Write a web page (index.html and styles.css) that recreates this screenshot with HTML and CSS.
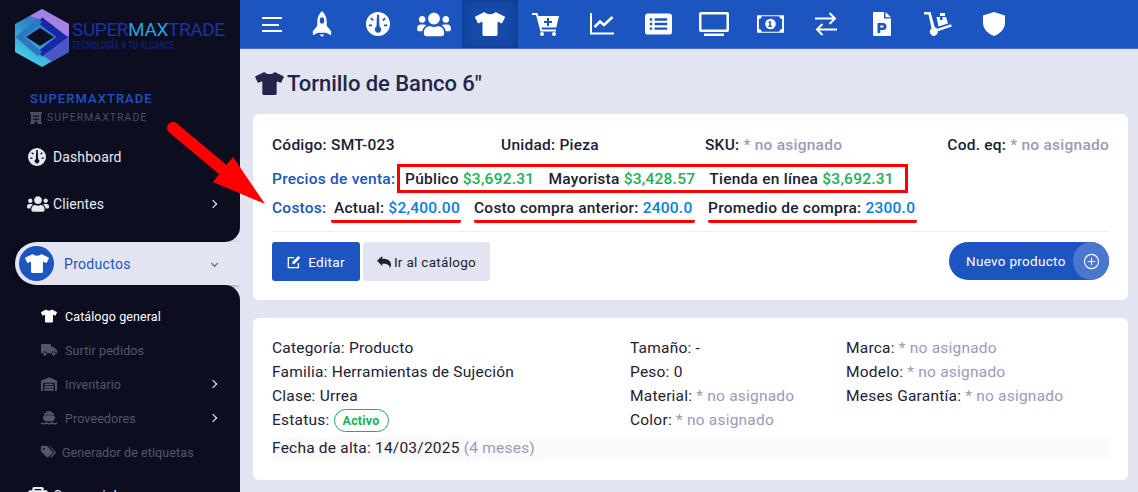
FILE: index.html
```html
<!DOCTYPE html>
<html lang="es">
<head>
    <meta charset="UTF-8">
    <title>Tornillo de Banco 6"</title>
    <link rel="stylesheet" href="styles.css">
</head>
<body>
    <svg class="sprite" xmlns="http://www.w3.org/2000/svg">
        <symbol id="i-shirt" viewBox="0 0 640 512"><path d="M631.2 96.5L436.5 0C416.4 27.8 371.9 47.2 320 47.2S223.6 27.8 203.5 0L8.8 96.5c-7.9 4-11.1 13.6-7.2 21.5l57.2 114.5c4 7.9 13.6 11.1 21.5 7.2l56.6-27.7c10.6-5.2 23-2.7 23 9.4V480c0 17.7 14.3 32 32 32h256c17.7 0 32-14.3 32-32V221.9c0-12.2 12.4-14.6 23-9.4l56.6 27.7c7.9 4 17.5.8 21.5-7.2L638.3 118c4-7.9.8-17.6-7.1-21.5z"/></symbol>
        <symbol id="i-users" viewBox="0 0 640 512"><path d="M96 224c35.3 0 64-28.7 64-64s-28.7-64-64-64-64 28.7-64 64 28.7 64 64 64zm448 0c35.3 0 64-28.7 64-64s-28.7-64-64-64-64 28.7-64 64 28.7 64 64 64zm32 32h-64c-17.6 0-33.5 7.1-45.1 18.6 40.3 22.1 68.9 62 75.1 109.4h66c17.7 0 32-14.3 32-32v-32c0-35.3-28.7-64-64-64zm-256 0c61.9 0 112-50.1 112-112S381.9 32 320 32 208 82.1 208 144s50.1 112 112 112zm76.8 32h-8.3c-20.8 10-43.9 16-68.5 16s-47.6-6-68.5-16h-8.3C179.6 288 128 339.6 128 403.2V432c0 26.5 21.5 48 48 48h288c26.5 0 48-21.5 48-48v-28.8c0-63.6-51.6-115.2-115.2-115.2zm-223.7-13.4C161.5 263.1 145.6 256 128 256H64c-35.3 0-64 28.7-64 64v32c0 17.7 14.3 32 32 32h65.9c6.3-47.4 34.9-87.3 75.2-109.4z"/></symbol>
        <symbol id="i-gauge" viewBox="0 0 24 24"><path fill-rule="evenodd" d="M12 0a12 12 0 1 0 0 24 12 12 0 0 0 0-24zM11 2.800h2l.5 11.800a3.200 3.200 0 1 1-3 0zM5.500 5.500l2.300 2.300-1.300 1.300-2.300-2.300zM18.500 5.500l1.300 1.300-2.300 2.300-1.300-1.300zM2.800 12.500h3.200v1.800H2.800zM18 12.500h3.200v1.800H18z"/></symbol>
        <symbol id="i-rocket" viewBox="0 0 20 26"><path fill-rule="evenodd" d="M10 0c3 2.600 4.700 6.300 4.700 10.500v4.300l4.500 5.500-.1 3.900-4.900-2.400H5.800L.9 24.200.8 20.300l4.500-5.500v-4.300C5.300 6.300 7 2.600 10 0zm0 6.300a2.200 3.200 0 1 0 0 6.400 2.200 3.200 0 0 0 0-6.400zM7.600 23.400h4.800L10 26z"/></symbol>
        <symbol id="i-cart" viewBox="0 0 28 24"><path fill-rule="evenodd" d="M0 1h5.500l.8 3H27l-2.700 11.500H9.500l.5 2H24v2H8.500L4 3H0zM15 6v3h-3v2h3v3h2v-3h3V9h-3V6z"/><circle cx="10" cy="22" r="2"/><circle cx="22" cy="22" r="2"/></symbol>
        <symbol id="i-chart" viewBox="0 0 24 24"><path d="M1 1v20.500h23" fill="none" stroke="currentColor" stroke-width="2"/><path d="M4.500 15l5.500-5.500 4 3.500 8.500-8" fill="none" stroke="currentColor" stroke-width="2.600"/></symbol>
        <symbol id="i-list" viewBox="0 0 28 22"><path fill-rule="evenodd" d="M3 0h22a3 3 0 0 1 3 3v16a3 3 0 0 1-3 3H3a3 3 0 0 1-3-3V3a3 3 0 0 1 3-3zM5 5v2.500h2.500V5zM10 5v2.500h13V5zM5 9.800v2.500h2.500V9.800zM10 9.800v2.500h13V9.800zM5 14.500V17h2.500v-2.500zM10 14.500V17h13v-2.500z"/></symbol>
        <symbol id="i-tv" viewBox="0 0 30 24"><path fill-rule="evenodd" d="M2 0h26a2 2 0 0 1 2 2v16a2 2 0 0 1-2 2H2a2 2 0 0 1-2-2V2a2 2 0 0 1 2-2zm.5 2.500v15h25v-15zM5 21.500h20V24H5z"/></symbol>
        <symbol id="i-money" viewBox="0 0 28 20"><path fill-rule="evenodd" d="M0 1h28v18H0zM2 5v10a3.500 3.500 0 0 1 3 3h18a3.500 3.500 0 0 1 3-3V5a3.500 3.500 0 0 1-3-3H5a3.500 3.500 0 0 1-3 3zM14 4.500a5.500 5.500 0 1 1 0 11 5.500 5.500 0 0 1 0-11zM13.800 6.800l-2 1v1.100l1-.3v3.300h-1.100V13h3.800v-1.100h-1.100V6.800z"/></symbol>
        <symbol id="i-swap" viewBox="0 0 22 24"><path d="M0 6.500h20M14.500 1l5.500 5.500-5.500 5.500M22 17.500H2M7.500 12L2 17.500 7.500 23" fill="none" stroke="currentColor" stroke-width="2"/></symbol>
        <symbol id="i-file" viewBox="0 0 18 24"><path fill-rule="evenodd" d="M1 0h10v6.500h7V23a1 1 0 0 1-1 1H1a1 1 0 0 1-1-1V1a1 1 0 0 1 1-1zm3.500 11v10h2.800v-3h2.700a3.500 3.500 0 0 0 0-7zm2.800 2.400h2.300a1.100 1.100 0 0 1 0 2.200H7.300zM12.500 0L18 5.200h-5.500z"/></symbol>
        <symbol id="i-dolly" viewBox="0 0 28 24"><path d="M0 0h6.500l4.300 15.200a4 4 0 0 1 2.400 1.600L27 12.200l.8 2.400-14 4.600a4 4 0 1 1-6.200-2.700L4.500 2.500H0z"/><path fill-rule="evenodd" d="M12.500 5h3.500v3h2.500V5H22l2 6.500-9.500 3zM16 1h5v3h-5z"/></symbol>
        <symbol id="i-shield" viewBox="0 0 22 24"><path d="M11 0l11 3.500v7c0 6.500-4.500 11-11 13.500C4.500 21.500 0 17 0 10.500v-7z"/></symbol>
        <symbol id="i-building" viewBox="0 0 12 12"><path fill-rule="evenodd" d="M0 0h12v2h-1v8.500h1V12H7.500V9.500h-3V12H0v-1.500h1V2H0zM3 3.500v1.500h1.500V3.500zM7.500 3.500v1.500H9V3.500zM3 6.500V8h1.500V6.500zM7.500 6.500V8H9V6.500zM5 3.500v1.500h2V3.500zM5 6.500V8h2V6.500z"/></symbol>
        <symbol id="i-truck" viewBox="0 0 24 18"><path d="M1.500 0h12A1.500 1.500 0 0 1 15 1.500V4h3.500L24 9.500V14h-2a3 3 0 0 0-6 0H9a3 3 0 0 0-6 0H0V1.500A1.500 1.500 0 0 1 1.500 0z"/><circle cx="6" cy="15" r="2.500"/><circle cx="19" cy="15" r="2.500"/></symbol>
        <symbol id="i-garage" viewBox="0 0 24 20"><path fill-rule="evenodd" d="M12 0l12 5v15h-3V8H3v12H0V5z"/><path d="M5 9.500h14V12H5zM5 13h14v2.500H5zM5 16.700h14V20H5z"/></symbol>
        <symbol id="i-ship" viewBox="0 0 24 20"><path d="M8 0h8v2.500h3v5l3 1-3.500 6.500h-13L2 8.500l3-1v-5h3zM7.500 5v1.800L12 5.500l4.500 1.300V5z"/><path d="M0 16.500c2 0 2.500 1.300 4 1.300s2-1.300 4-1.300 2.500 1.300 4 1.300 2-1.300 4-1.300 2.500 1.300 4 1.300 2-1.300 4-1.300V19c-2 0-2.500 1-4 1s-2-1-4-1-2.500 1-4 1-2-1-4-1-2.500 1-4 1-2-1-4-1z"/></symbol>
        <symbol id="i-tags" viewBox="0 0 24 20"><path fill-rule="evenodd" d="M0 2a2 2 0 0 1 2-2h7l9 9a2 2 0 0 1 0 2.800L11.800 18a2 2 0 0 1-2.800 0L0 9zM4.500 3a1.700 1.700 0 1 0 0 3.400 1.700 1.700 0 0 0 0-3.400z"/><path d="M12 0h1.500L23 9.500a2 2 0 0 1 0 2.800L16.500 19l-1.500-1.500 6.200-7z"/></symbol>
        <symbol id="i-case" viewBox="0 0 24 22"><path fill-rule="evenodd" d="M5 4V2a2 2 0 0 1 2-2h10a2 2 0 0 1 2 2v2h3a2 2 0 0 1 2 2v14a2 2 0 0 1-2 2H2a2 2 0 0 1-2-2V6a2 2 0 0 1 2-2zm3-1.500V4h8V2.500z"/></symbol>
    </svg>

    <div class="app">
        <aside class="sidebar">
            <div class="side-top">
                <div class="brand">
                    <svg class="brand-logo" viewBox="0 0 56 58">
                        <defs>
                            <linearGradient id="hexa" x1="0" y1="1" x2="0.6" y2="0">
                                <stop offset="0" stop-color="#52e6ee"/>
                                <stop offset="0.6" stop-color="#2f8ccc"/>
                                <stop offset="1" stop-color="#3f5fc4"/>
                            </linearGradient>
                        </defs>
                        <path d="M28 0l27 15v28L28 58 1 43V15z" fill="url(#hexa)"/>
                        <path d="M28 0l27 15v15L34 14 16 7z" fill="#a681e2"/>
                        <path d="M55 26v17L38 52.500 30 47z" fill="#4a55c8"/>
                        <path d="M26 11l22 17-22 17" fill="none" stroke="#1428a8" stroke-width="7"/>
                        <path d="M26 11L6 28l20 17" fill="none" stroke="#2a78c0" stroke-width="6"/>
                        <path d="M26 19l14 9-14 9-14-9z" fill="#0c0e20"/>
                    </svg>
                    <div class="brand-text">
                        <div class="brand-name">SUPER<span>MAX</span>TRADE</div>
                        <div class="brand-tag">TECNOLOGÍA A TU ALCANCE</div>
                    </div>
                </div>
                <div class="account">
                    <div class="account-name">SUPERMAXTRADE</div>
                    <div class="account-sub"><svg><use href="#i-building"/></svg>SUPERMAXTRADE</div>
                </div>
                <a class="side-link dash"><svg class="side-icon gauge"><use href="#i-gauge"/></svg>Dashboard</a>
                <a class="side-link"><svg class="side-icon"><use href="#i-users"/></svg>Clientes<span class="chev"></span></a>
            </div>
            <div class="active-wrap">
                <a class="side-active">
                    <span class="active-dot"><svg><use href="#i-shirt"/></svg></span>
                    Productos
                    <span class="chev-down"></span>
                </a>
            </div>
            <div class="side-rest">
                <a class="sub-link on"><svg><use href="#i-shirt"/></svg>Catálogo general</a>
                <a class="sub-link"><svg><use href="#i-truck"/></svg>Surtir pedidos</a>
                <a class="sub-link"><svg><use href="#i-garage"/></svg>Inventario<span class="chev"></span></a>
                <a class="sub-link"><svg><use href="#i-ship"/></svg>Proveedores<span class="chev"></span></a>
                <a class="sub-link tight"><svg><use href="#i-tags"/></svg>Generador de etiquetas</a>
                <a class="side-link last"><svg class="side-icon"><use href="#i-case"/></svg>Comercial</a>
            </div>
        </aside>

        <div class="main">
            <nav class="topbar">
                <div class="burger"><span></span><span class="mid"></span><span></span></div>
                <a class="top-item"><svg class="t-rocket"><use href="#i-rocket"/></svg></a>
                <a class="top-item"><svg><use href="#i-gauge"/></svg></a>
                <a class="top-item"><svg class="t-users"><use href="#i-users"/></svg></a>
                <a class="top-item active"><svg class="t-wide"><use href="#i-shirt"/></svg></a>
                <a class="top-item"><svg class="t-wide"><use href="#i-cart"/></svg></a>
                <a class="top-item"><svg><use href="#i-chart"/></svg></a>
                <a class="top-item"><svg class="t-small"><use href="#i-list"/></svg></a>
                <a class="top-item"><svg class="t-wide"><use href="#i-tv"/></svg></a>
                <a class="top-item"><svg class="t-small"><use href="#i-money"/></svg></a>
                <a class="top-item"><svg><use href="#i-swap"/></svg></a>
                <a class="top-item"><svg><use href="#i-file"/></svg></a>
                <a class="top-item"><svg class="t-wide"><use href="#i-dolly"/></svg></a>
                <a class="top-item"><svg><use href="#i-shield"/></svg></a>
            </nav>

            <div class="content">
                <h1 class="page-title"><svg><use href="#i-shirt"/></svg>Tornillo de Banco 6"</h1>

                <section class="card card-main">
                    <div class="info-row">
                        <div>Código: SMT-023</div>
                        <div>Unidad: Pieza</div>
                        <div>SKU: <span class="muted">* no asignado</span></div>
                        <div>Cod. eq: <span class="muted">* no asignado</span></div>
                    </div>
                    <div class="price-row">
                        <span class="label">Precios de venta:</span>
                        <div class="price-box">
                            <span>Público <b class="green">$3,692.31</b></span>
                            <span>Mayorista <b class="green">$3,428.57</b></span>
                            <span>Tienda en línea <b class="green">$3,692.31</b></span>
                        </div>
                    </div>
                    <div class="cost-row">
                        <span class="label">Costos:</span>
                        <span class="cost c1">Actual: <b class="sky">$2,400.00</b></span>
                        <span class="cost c2">Costo compra anterior: <b class="sky">2400.0</b></span>
                        <span class="cost c3">Promedio de compra: <b class="sky">2300.0</b></span>
                    </div>
                    <div class="actions">
                        <button class="btn btn-blue">
                            <svg class="line-icon" viewBox="0 0 16 16" stroke="currentColor" stroke-width="1.500"><path d="M13 9v5.500H1.500V3H8"/><path d="M6 10.500l.5-3L13 1l2.200 2.200-6.500 6.700z" fill="currentColor" stroke="none"/></svg>
                            Editar
                        </button>
                        <button class="btn btn-light">
                            <svg viewBox="0 0 16 14"><path d="M0 5.500L6 0v3.200c5.500 0 10 1.800 10 6.800 0 1.500-.6 2.900-1.500 4 .3-3.500-3-5.500-8.500-5V11.500z"/></svg>
                            Ir al catálogo
                        </button>
                        <button class="btn-pill">
                            Nuevo producto
                            <span class="pill-plus"><svg class="line-icon" viewBox="0 0 18 18" stroke="currentColor" stroke-width="1.200"><circle cx="9" cy="9" r="7.500"/><path d="M9 5v8M5 9h8"/></svg></span>
                        </button>
                    </div>
                </section>

                <section class="card card-detail">
                    <div class="detail-grid">
                        <div>Categoría: Producto</div>
                        <div>Tamaño: -</div>
                        <div>Marca: <span class="muted">* no asignado</span></div>
                        <div>Familia: Herramientas de Sujeción</div>
                        <div>Peso: 0</div>
                        <div>Modelo: <span class="muted">* no asignado</span></div>
                        <div>Clase: Urrea</div>
                        <div>Material: <span class="muted">* no asignado</span></div>
                        <div>Meses Garantía: <span class="muted">* no asignado</span></div>
                        <div>Estatus: <span class="badge">Activo</span></div>
                        <div>Color: <span class="muted">* no asignado</span></div>
                        <div></div>
                    </div>
                    <div class="date-row">Fecha de alta: 14/03/2025 <span class="muted">(4 meses)</span></div>
                </section>
            </div>
        </div>
    </div>

    <svg class="red-arrow" viewBox="0 0 110 90">
        <path d="M6 6l54 45" stroke="#f00" stroke-width="12" stroke-linecap="round"/>
        <path d="M66 35L98 82 46 60z" fill="#f00"/>
    </svg>
</body>
</html>
```

FILE: styles.css
```css
* {
    box-sizing: border-box;
}
html, body {
    height: 100%;
}
body {
    margin: 0;
    overflow: hidden;
    font-family: Roboto, "Liberation Sans", sans-serif;
    font-size: 15.5px;
    letter-spacing: 0.22px;
    color: #1d2035;
    background-color: #e2e4f1;
}
.sprite {
    display: none;
}
svg {
    fill: currentColor;
}
svg.line-icon {
    fill: none;
}
.app {
    display: flex;
    height: 492px;
}

/* sidebar */
.sidebar {
    width: 240px;
    flex: none;
    height: 492px;
    overflow: hidden;
    background-color: #e2e4f1;
    color: #e8e9f0;
}
.side-top {
    height: 242px;
    background-color: #0c0e20;
    border-bottom-right-radius: 15px;
}
.brand {
    display: flex;
    padding: 9px 0 0 14px;
    height: 90px;
}
.brand-logo {
    width: 56px;
    height: 58px;
    flex: none;
}
.brand-text {
    padding: 11px 0 0 2px;
}
.brand-name {
    font-size: 19px;
    line-height: 20px;
    font-weight: 400;
    letter-spacing: -0.4px;
    color: #1c30a8;
    white-space: nowrap;
}
.brand-name span {
    color: #2c9fdc;
    font-weight: 400;
}
.brand-tag {
    font-size: 10px;
    line-height: 12px;
    font-weight: 700;
    letter-spacing: 0.2px;
    color: #10206e;
    white-space: nowrap;
    transform: scaleX(0.75);
    transform-origin: left;
}
.account {
    padding-left: 30px;
}
.account-name {
    font-size: 13px;
    line-height: 18px;
    font-weight: 500;
    letter-spacing: 1.05px;
    color: #1c54c0;
}
.account-sub {
    display: flex;
    align-items: center;
    margin-top: 1px;
    font-size: 10.5px;
    line-height: 18px;
    letter-spacing: 1px;
    color: #4c4d5e;
}
.account-sub svg {
    width: 12px;
    height: 12px;
    margin-right: 5px;
}
.side-link {
    display: flex;
    align-items: center;
    height: 47px;
    padding-left: 27px;
    font-size: 14px;
    letter-spacing: 0.1px;
}
.dash {
    margin-top: 6px;
}
.side-icon {
    width: 22px;
    height: 18px;
    margin-right: 4px;
    flex: none;
}
.side-icon.gauge {
    width: 18px;
    margin: 0 7px 0 1px;
}
.chev {
    width: 6px;
    height: 6px;
    margin-left: auto;
    margin-right: 24px;
    border-top: 1.5px solid #fff;
    border-right: 1.5px solid #fff;
    transform: rotate(45deg);
}
.active-wrap {
    background-color: #0c0e20;
    padding-left: 15px;
}
.side-active {
    display: flex;
    align-items: center;
    height: 43px;
    padding-left: 4px;
    color: #1c54c0;
    font-size: 14px;
    letter-spacing: 0.3px;
    background-color: #e2e4f1;
    border-radius: 22px 0 0 22px;
    box-shadow: -1px 1px 4px rgba(0, 0, 0, 0.35);
}
.active-dot {
    display: flex;
    align-items: center;
    justify-content: center;
    width: 35px;
    height: 35px;
    margin-right: 10px;
    border-radius: 50%;
    background-color: #1c54c0;
    color: #fff;
}
.active-dot svg {
    width: 24px;
    height: 19px;
}
.chev-down {
    width: 5px;
    height: 5px;
    margin-left: auto;
    margin-right: 23px;
    border-right: 1.5px solid #1c54c0;
    border-bottom: 1.5px solid #1c54c0;
    transform: rotate(45deg);
}
.side-rest {
    height: 207px;
    padding-top: 15px;
    background-color: #0c0e20;
    border-top-right-radius: 15px;
}
.sub-link {
    display: flex;
    align-items: center;
    height: 34px;
    margin-top: -1px;
    margin-bottom: 1px;
    padding-left: 41px;
    font-size: 12.5px;
    letter-spacing: 0.1px;
    color: #55566a;
}
.sub-link svg {
    width: 16px;
    height: 14px;
    margin-right: 8px;
    flex: none;
}
.sub-link.on {
    color: #fff;
}
.sub-link.tight svg {
    margin-right: 6px;
    width: 15px;
}
.side-link.last {
    margin-top: 3px;
}

/* top bar */
.main {
    flex: 1;
    min-width: 0;
    display: flex;
    flex-direction: column;
}
.topbar {
    display: flex;
    height: 49px;
    flex: none;
    background-color: #1c54c0;
    border-bottom: 1px solid #3f70d0;
    color: #fff;
}
.burger {
    width: 54px;
    padding: 17px 0 0 22px;
}
.burger span {
    display: block;
    width: 20px;
    height: 2px;
    margin-bottom: 4.5px;
    background-color: #fff;
}
.burger .mid {
    width: 17px;
}
.top-item {
    display: flex;
    align-items: center;
    justify-content: center;
    width: 56px;
    height: 48px;
}
.top-item svg {
    width: 24px;
    height: 24px;
}
.top-item .t-wide {
    width: 30px;
    height: 24px;
}
.top-item .t-users {
    width: 34px;
    height: 27px;
}
.top-item .t-small {
    width: 27px;
    height: 22px;
}
.top-item .t-rocket {
    width: 20px;
    height: 26px;
}
.top-item.active {
    background-color: #164aa8;
    box-shadow: inset 0 0 8px rgba(8, 40, 110, 0.5);
}

/* content */
.content {
    padding: 0 10px 0 13px;
}
.page-title {
    display: flex;
    align-items: center;
    height: 65px;
    margin: 0;
    padding-top: 4px;
    font-size: 22px;
    font-weight: 500;
    letter-spacing: -0.05px;
    color: #25254a;
}
.page-title svg {
    width: 29px;
    height: 23px;
    margin: 0 3px 0 2px;
}
.card {
    background-color: #fff;
    border-radius: 6px;
    padding: 21px 19px 0;
}
.card-main {
    height: 186px;
    font-weight: 500;
    letter-spacing: 0.24px;
}
.info-row {
    display: grid;
    grid-template-columns: 229px 204px 1fr auto;
    line-height: 21px;
}
.muted {
    color: #9a9abb;
}
.label {
    flex: none;
    color: #1c54c0;
    white-space: nowrap;
}
.green {
    color: #1bb157;
    font-weight: 500;
}
.sky {
    color: #0a7fd6;
    font-weight: 500;
}
.price-row {
    display: flex;
    align-items: center;
    margin-top: 8px;
}
.price-row .label {
    width: 124px;
}
.price-box {
    display: flex;
    align-items: center;
    gap: 14px;
    width: 511px;
    height: 29px;
    margin-left: 1px;
    padding-left: 5px;
    border: 3px solid #f00;
}
.cost-row {
    display: flex;
    height: 25px;
    margin-top: 5px;
    align-items: flex-start;
    line-height: 20px;
}
.cost-row .label {
    width: 53px;
}
.cost {
    flex: none;
    height: 25px;
    border-bottom: 3px solid #f00;
    border-radius: 2px;
    margin-left: 13px;
    white-space: nowrap;
}
.c1 {
    margin-left: 6px;
    width: 130px;
    padding-left: 3px;
}
.c2 {
    width: 221px;
}
.c3 {
    width: 209px;
}
.actions {
    display: flex;
    align-items: flex-start;
    gap: 3px;
    margin-top: 8px;
    padding-top: 10px;
    border-top: 1px solid #eeeef2;
}
.btn {
    display: flex;
    align-items: center;
    justify-content: center;
    height: 39px;
    border: 0;
    border-radius: 3px;
    font-family: inherit;
    font-size: 13.5px;
    letter-spacing: 0.3px;
}
.btn svg {
    width: 14px;
    height: 14px;
}
.btn-blue {
    width: 88px;
    gap: 7px;
    background-color: #1c54c0;
    color: #fff;
}
.btn-light {
    width: 127px;
    gap: 3px;
    background-color: #e2e4f1;
    color: #1d2035;
}
.btn-pill {
    display: flex;
    align-items: center;
    width: 160px;
    height: 38px;
    margin-left: auto;
    padding: 0 0 0 17px;
    border: 0;
    border-radius: 19px;
    background-color: #1c54c0;
    color: #fff;
    font-family: inherit;
    font-size: 13.5px;
    letter-spacing: 0.3px;
}
.pill-plus {
    display: flex;
    align-items: center;
    justify-content: center;
    width: 36px;
    height: 38px;
    margin-left: auto;
    border-radius: 50%;
    background-color: #4a76ce;
}
.pill-plus svg {
    width: 17px;
    height: 17px;
}
.card-detail {
    height: 162px;
    margin-top: 18px;
    padding-top: 18px;
}
.detail-grid {
    display: grid;
    grid-template-columns: 358px 216px 1fr;
    grid-auto-rows: 24px;
    line-height: 24px;
}
.badge {
    display: inline-block;
    padding: 0 8px;
    line-height: 21px;
    border: 1px solid #1bb157;
    border-radius: 12px;
    color: #1bb157;
    font-size: 12.5px;
    font-weight: 700;
}
.date-row {
    height: 23px;
    margin-top: 5px;
    line-height: 23px;
    background-color: #fafafa;
}
.red-arrow {
    position: absolute;
    left: 167px;
    top: 122px;
    width: 110px;
    height: 90px;
    overflow: visible;
}
```
